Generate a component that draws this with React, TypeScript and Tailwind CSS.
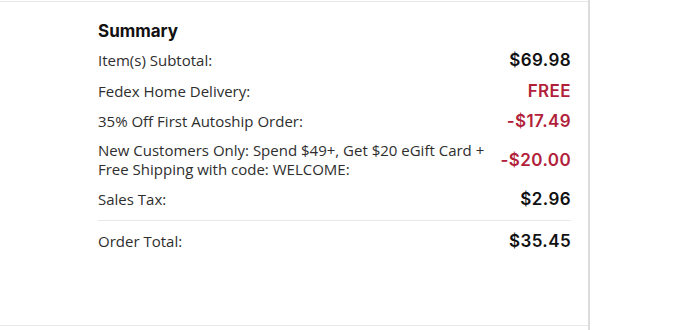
import React from 'react';

type RowProps = {
  label: React.ReactNode;
  value: string;
  red?: boolean;
  className?: string;
};

const Row: React.FC<RowProps> = ({ label, value, red, className = '' }) => {
  return (
    <div className={`flex items-center justify-between gap-4 ${className}`}>
      <div className="text-[15px] leading-[19px] text-[#2e2e2e]">{label}</div>
      <div
        className={`shrink-0 text-[17px] leading-5 font-semibold font-['Inter',sans-serif] tracking-[0.4px] ${
          red ? 'text-[#b21f3b]' : 'text-[#111111]'
        }`}
      >
        {value}
      </div>
    </div>
  );
};

const App: React.FC = () => {
  return (
    <div className="flex w-[690px] h-[330px] bg-white font-['Open_Sans',sans-serif]">
      <div className="w-[588px] h-[325px] mt-px border-t border-b border-[#e8e8e8] pl-[98px] pr-[17px] pt-[17px]">
        <h2 className="text-[17px] leading-6 font-bold text-[#111111] font-['Inter',sans-serif]">Summary</h2>
        <div className="mt-[7px] flex flex-col gap-[10px]">
          <Row label="Item(s) Subtotal:" value="$69.98" className="mb-px" />
          <Row label="Fedex Home Delivery:" value="FREE" red />
          <Row label="35% Off First Autoship Order:" value="-$17.49" red />
          <Row
            label={
              <>
                New Customers Only: Spend $49+, Get $20 eGift Card +
                <br />
                Free Shipping with code: WELCOME:
              </>
            }
            value="-$20.00"
            red
          />
          <Row label="Sales Tax:" value="$2.96" />
        </div>
        <div className="mt-[11px] h-px bg-[#e8e8e8]" />
        <div className="mt-[10px]">
          <Row label="Order Total:" value="$35.45" />
        </div>
      </div>
      <div className="w-[2px] h-full bg-[#dcdcdc]" />
    </div>
  );
};

export default App;
